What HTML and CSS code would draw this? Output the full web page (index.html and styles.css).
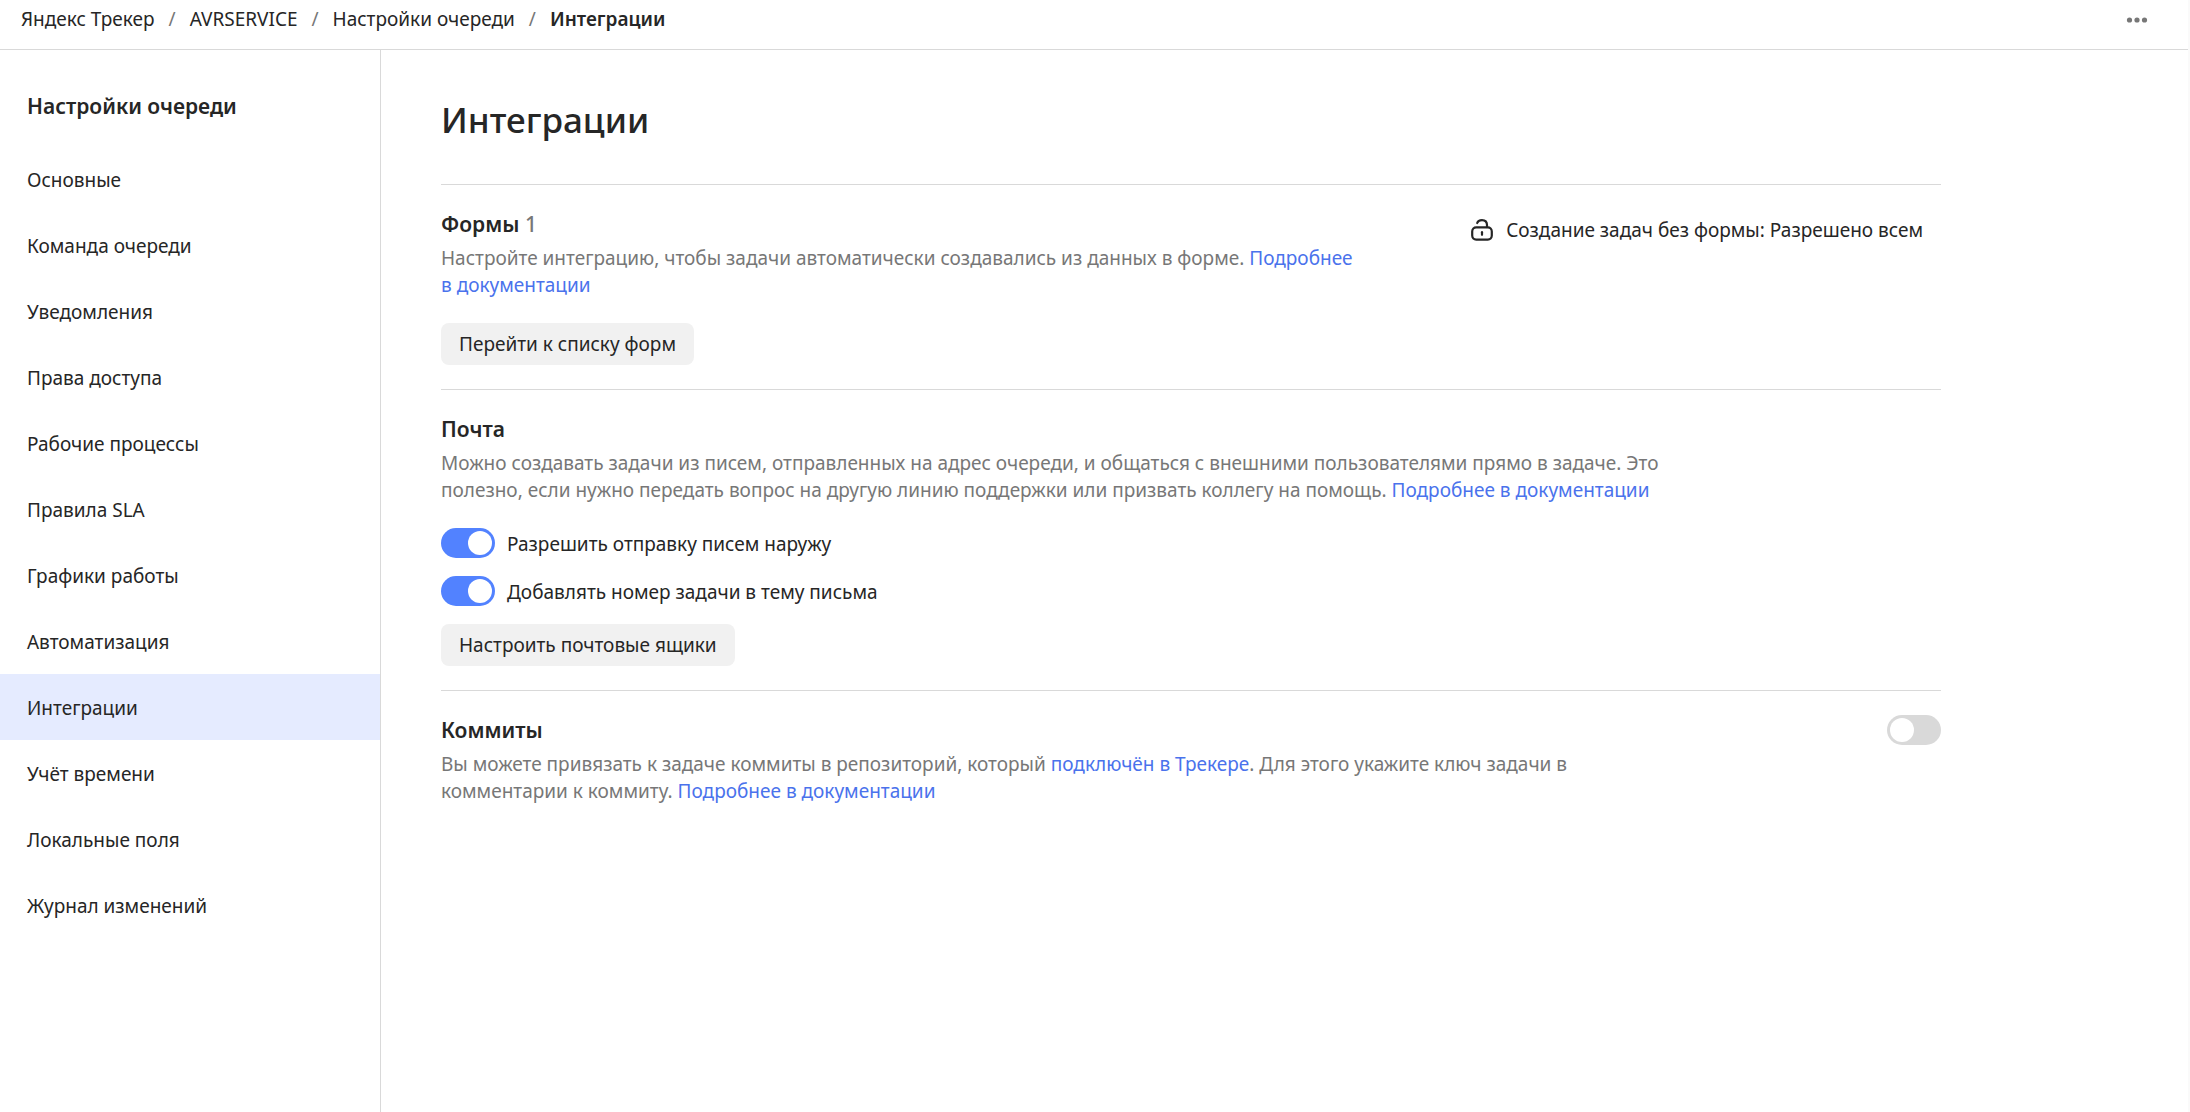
FILE: index.html
```html
<!DOCTYPE html>
<html lang="ru">
<head>
<meta charset="utf-8">
<meta name="viewport" content="width=device-width, initial-scale=1">
<title>Интеграции</title>
<link rel="stylesheet" href="styles.css">
</head>
<body>
<header class="topbar">
  <nav class="crumbs" aria-label="Навигация">
    <a href="#">Яндекс Трекер</a>
    <span class="sep">/</span>
    <a href="#">AVRSERVICE</a>
    <span class="sep">/</span>
    <a href="#">Настройки очереди</a>
    <span class="sep">/</span>
    <a href="#" class="current" aria-current="page">Интеграции</a>
  </nav>
  <button class="more" type="button" aria-label="Ещё">
    <svg width="24" height="24" viewBox="0 0 24 24" fill="currentColor"><circle cx="4.5" cy="12" r="2.6"/><circle cx="12" cy="12" r="2.6"/><circle cx="19.5" cy="12" r="2.6"/></svg>
  </button>
</header>
<div class="layout">
  <aside class="sidebar">
    <h2 class="sidebar-title">Настройки очереди</h2>
    <nav class="menu">
      <a href="#">Основные</a>
      <a href="#">Команда очереди</a>
      <a href="#">Уведомления</a>
      <a href="#">Права доступа</a>
      <a href="#">Рабочие процессы</a>
      <a href="#">Правила SLA</a>
      <a href="#">Графики работы</a>
      <a href="#">Автоматизация</a>
      <a href="#" class="active">Интеграции</a>
      <a href="#">Учёт времени</a>
      <a href="#">Локальные поля</a>
      <a href="#">Журнал изменений</a>
    </nav>
  </aside>
  <main class="content">
    <h1>Интеграции</h1>

    <section class="section">
      <div class="info narrow">
        <h2>Формы <span class="count">1</span></h2>
        <p>Настройте интеграцию, чтобы задачи автоматически создавались из данных в форме. <a href="#">Подробнее в&nbsp;документации</a></p>
        <button class="button" type="button">Перейти к списку форм</button>
      </div>
      <button class="access" type="button">
        <svg width="24" height="24" viewBox="0 0 24 24" fill="none" stroke="currentColor" stroke-width="2.2" stroke-linecap="round"><rect x="2.2" y="9.4" width="19.6" height="12.2" rx="4"/><path d="M7.2 5C7.8 3.2 9.6 2.1 12 2.1c3 0 5 2 5 5v2"/><path d="M12 14.2v2.6"/></svg>
        Создание задач без формы: Разрешено всем
      </button>
    </section>

    <section class="section">
      <div class="info wide">
        <h2>Почта</h2>
        <p>Можно создавать задачи из писем, отправленных на адрес очереди, и общаться с внешними пользователями прямо в задаче. Это полезно, если нужно передать вопрос на другую линию поддержки или призвать коллегу на помощь. <a href="#">Подробнее в документации</a></p>
        <div class="options">
          <label class="option"><input class="switch" type="checkbox" checked><span>Разрешить отправку писем наружу</span></label>
          <label class="option"><input class="switch" type="checkbox" checked><span>Добавлять номер задачи в тему письма</span></label>
          <button class="button" type="button">Настроить почтовые ящики</button>
        </div>
      </div>
    </section>

    <section class="section">
      <div class="info medium">
        <h2 id="commits">Коммиты</h2>
        <p>Вы можете привязать к задаче коммиты в репозиторий, который <a href="#">подключён в Трекере</a>. Для этого укажите ключ задачи в комментарии к коммиту. <a href="#">Подробнее в документации</a></p>
      </div>
      <input class="switch" type="checkbox" aria-labelledby="commits">
    </section>
  </main>
</div>
</body>
</html>
```
FILE: styles.css
```css
* {
  box-sizing: border-box;
}

body {
  margin: 0;
  min-height: 100vh;
  display: flex;
  flex-direction: column;
  border-right: 2px solid #fafafa;
  background: #fff;
  color: #262626;
  font-family: "Noto Sans", "Open Sans", sans-serif;
  font-size: 19px;
  line-height: 27px;
}

h1, h2, p {
  margin: 0;
}

h2 {
  font-size: 21px;
  font-weight: 600;
  line-height: 30px;
}

a {
  color: inherit;
  text-decoration: none;
}

button {
  border: 0;
  background: none;
  color: inherit;
  font: inherit;
  cursor: pointer;
}

svg {
  display: block;
  flex: none;
}

.topbar {
  display: flex;
  align-items: flex-start;
  justify-content: space-between;
  height: 50px;
  padding: 6px 39px 0 21px;
  border-bottom: 1px solid #d9d9d9;
}

.crumbs {
  display: flex;
  gap: 14px;
}

.sep {
  color: #777;
}

.current {
  font-weight: 600;
}

.more {
  padding: 2px 0;
  color: #777;
}

.layout {
  display: flex;
  flex: 1;
}

.sidebar {
  flex: none;
  width: 381px;
  padding-top: 41px;
  border-right: 1px solid #d9d9d9;
}

.sidebar-title {
  padding: 0 27px 25px;
}

.menu {
  display: flex;
  flex-direction: column;
}

.menu a {
  display: flex;
  align-items: center;
  height: 66px;
  padding: 2px 27px 0;
}

.menu .active {
  background: #e5ebff;
}

.content {
  flex: 0 1 1620px;
  padding: 46px 60px;
}

h1 {
  margin-bottom: 40px;
  font-size: 35px;
  font-weight: 500;
  line-height: 48px;
}

.section {
  display: flex;
  align-items: flex-start;
  justify-content: space-between;
  padding: 24px 0;
  border-top: 1px solid #d9d9d9;
}

.info p {
  margin-top: 6px;
  color: #777;
}

.info p a {
  color: #4a72ec;
}

.narrow {
  max-width: 950px;
}

.wide {
  max-width: 1240px;
}

.medium {
  max-width: 1160px;
}

.count {
  color: #777;
  font-weight: 500;
}

.button {
  height: 42px;
  padding: 0 18px;
  border-radius: 8px;
  background: #f1f1f1;
}

.narrow .button {
  margin-top: 24px;
}

.access {
  display: flex;
  align-items: center;
  gap: 12px;
  height: 42px;
  padding: 0 18px;
}

.options {
  display: flex;
  flex-direction: column;
  align-items: flex-start;
  gap: 18px;
  margin-top: 24px;
}

.option {
  display: flex;
  gap: 12px;
}

.option span {
  padding-top: 3px;
}

.switch {
  appearance: none;
  flex: none;
  width: 54px;
  height: 30px;
  margin: 0;
  padding: 3px;
  border-radius: 15px;
  background: #d9d9d9;
  cursor: pointer;
}

.switch::before {
  content: "";
  display: block;
  width: 24px;
  height: 24px;
  border-radius: 50%;
  background: #fff;
}

.switch:checked {
  background: #5282ff;
}

.switch:checked::before {
  margin-left: auto;
}
```
